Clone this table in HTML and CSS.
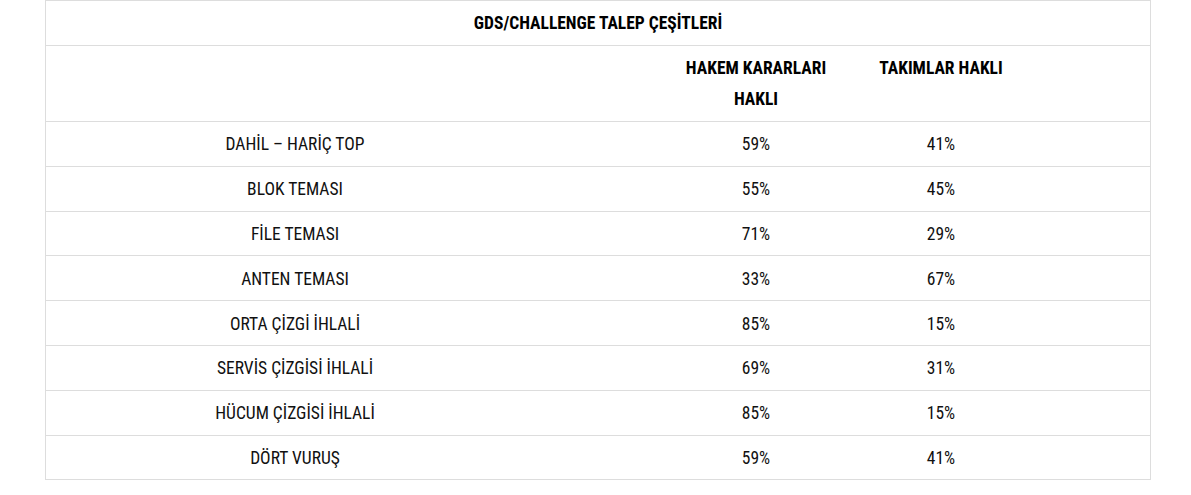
FILE: index.html
```html
<!DOCTYPE html>
<html lang="tr">
<head>
<meta charset="utf-8">
<title>GDS/Challenge Talep Çeşitleri</title>
<link rel="stylesheet" href="styles.css">
</head>
<body>
<div class="page">
  <div class="table">
    <div class="row title-row">
      <div class="cell full">GDS/CHALLENGE TALEP ÇEŞİTLERİ</div>
    </div>
    <div class="row head-row">
      <div class="cell c1"></div>
      <div class="cell c2"><span class="wrap">HAKEM KARARLARI HAKLI</span></div>
      <div class="cell c3">TAKIMLAR HAKLI</div>
    </div>
    <div class="row body-row"><div class="cell c1">DAHİL – HARİÇ TOP</div><div class="cell c2">59%</div><div class="cell c3">41%</div></div>
    <div class="row body-row"><div class="cell c1">BLOK TEMASI</div><div class="cell c2">55%</div><div class="cell c3">45%</div></div>
    <div class="row body-row"><div class="cell c1">FİLE TEMASI</div><div class="cell c2">71%</div><div class="cell c3">29%</div></div>
    <div class="row body-row"><div class="cell c1">ANTEN TEMASI</div><div class="cell c2">33%</div><div class="cell c3">67%</div></div>
    <div class="row body-row"><div class="cell c1">ORTA ÇİZGİ İHLALİ</div><div class="cell c2">85%</div><div class="cell c3">15%</div></div>
    <div class="row body-row"><div class="cell c1">SERVİS ÇİZGİSİ İHLALİ</div><div class="cell c2">69%</div><div class="cell c3">31%</div></div>
    <div class="row body-row"><div class="cell c1">HÜCUM ÇİZGİSİ İHLALİ</div><div class="cell c2">85%</div><div class="cell c3">15%</div></div>
    <div class="row body-row"><div class="cell c1">DÖRT VURUŞ</div><div class="cell c2">59%</div><div class="cell c3">41%</div></div>
  </div>
</div>
</body>
</html>
```
FILE: styles.css
```css
html, body {
  margin: 0;
  padding: 0;
  background: #fff;
}
body {
  font-family: "Roboto Condensed", Roboto, "Liberation Sans Narrow", sans-serif;
  font-stretch: condensed;
  font-size: 17.5px;
  color: #111;
}
.page {
  padding-left: 45px;
}
.table {
  width: 1104px;
  border: 1px solid #dddddd;
  border-bottom: none;
}
.row {
  display: grid;
  grid-template-columns: 498px 119px 186px 184px 1fr;
  border-bottom: 1px solid #dddddd;
}
.cell {
  text-align: center;
}
.c1 { grid-column: 1; }
.c2 { grid-column: 3; }
.c3 { grid-column: 4; }
.full { grid-column: 1 / -1; }
.title-row {
  height: 44px;
  align-items: center;
  font-weight: 700;
  color: #000;
}
.head-row {
  height: 75px;
  align-items: start;
  font-weight: 700;
  color: #000;
}
.head-row .cell {
  padding-top: 7px;
  line-height: 31px;
}
.wrap {
  display: inline-block;
  max-width: 160px;
}
.body-row {
  height: 43.8px;
  align-items: center;
  line-height: 22px;
}
.body-row .cell {
  padding-top: 1px;
}
```
